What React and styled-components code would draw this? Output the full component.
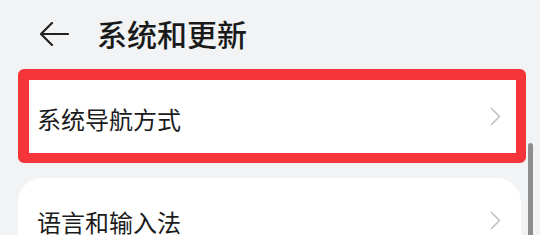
import styled, { createGlobalStyle } from "styled-components";

const GlobalStyle = createGlobalStyle`
  html, body {
    margin: 0;
    padding: 0;
    background: #f1f3f5;
  }
  body {
    font-family: "Noto Sans CJK SC", "Noto Sans", sans-serif;
    color: #1b1b1b;
    overflow: hidden;
  }
`;

const items = [
  { label: "系统导航方式", highlighted: true },
  { label: "语言和输入法" },
];

function App() {
  return (
    <Page>
      <GlobalStyle />
      <Header>
        <BackButton aria-label="back">
          <svg width="30" height="24" viewBox="0 0 30 24" fill="none">
            <path
              d="M2 12H29M13 1L2 12l11 11"
              stroke="#222"
              strokeWidth="2.2"
              strokeLinecap="round"
              strokeLinejoin="round"
            />
          </svg>
        </BackButton>
        <Title>系统和更新</Title>
      </Header>
      <List>
        {items.map((item) => (
          <Card key={item.label} highlighted={item.highlighted}>
            <Label>{item.label}</Label>
            <Chevron width="11" height="19" viewBox="0 0 11 19" fill="none">
              <path
                d="M1.5 1.5L9.5 9.5l-8 8"
                stroke="#c2c2c2"
                strokeWidth="1.7"
                strokeLinecap="round"
                strokeLinejoin="round"
              />
            </Chevron>
          </Card>
        ))}
      </List>
      <ScrollThumb />
    </Page>
  );
}

export default App;

const Page = styled.div`
  position: relative;
  width: 540px;
  height: 235px;
  overflow: hidden;
`;

const Header = styled.div`
  display: flex;
  align-items: center;
  height: 69px;
  padding-left: 39px;
  gap: 28px;
  box-sizing: border-box;
`;

const BackButton = styled.div`
  display: flex;
  width: 30px;
  height: 24px;
  margin-top: -2px;
`;

const Title = styled.h1`
  margin: 0;
  font-size: 30px;
  font-weight: 500;
  line-height: 1;
  margin-top: -4px;
  color: #1a1a1a;
`;

const List = styled.div`
  display: flex;
  flex-direction: column;
  align-items: flex-start;
  gap: 15px;
  padding-left: 18px;
`;

const Card = styled.div`
  display: flex;
  align-items: center;
  justify-content: space-between;
  box-sizing: border-box;
  background: #fff;
  width: ${(p) => (p.highlighted ? "508px" : "503px")};
  height: ${(p) => (p.highlighted ? "94px" : "84px")};
  border-radius: ${(p) => (p.highlighted ? "6px" : "24px")};
  border: ${(p) => (p.highlighted ? "solid #f5353a" : "none")};
  border-width: 11px 10px 10px 11px;
  padding: ${(p) => (p.highlighted ? "0 15px 0 8px" : "0 20px 0 19px")};
`;

const Label = styled.span`
  font-size: 24px;
  font-weight: 400;
  line-height: 1;
  padding-top: 4px;
  color: #1b1b1b;
`;

const Chevron = styled.svg`
  flex-shrink: 0;
`;

const ScrollThumb = styled.div`
  position: absolute;
  left: 528px;
  top: 143px;
  width: 5px;
  height: 120px;
  border-radius: 3px;
  background: #8e8e8e;
`;
